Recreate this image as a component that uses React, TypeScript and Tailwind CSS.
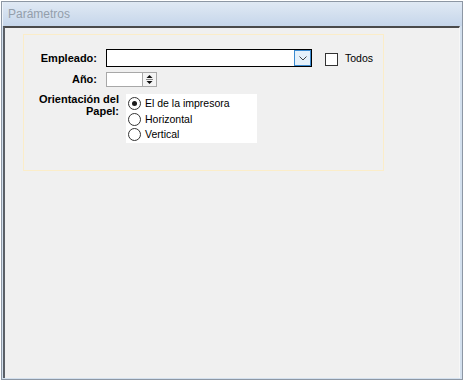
import React from "react";

const RadioOption = ({ label, checked }: { label: string; checked?: boolean }) => (
  <label className="flex items-center gap-[4px] h-[16px]">
    <span className="w-[13px] h-[13px] rounded-full border border-[#333333] bg-white flex items-center justify-center">
      {checked && <span className="w-[5px] h-[5px] rounded-full bg-[#1a1a1a]" />}
    </span>
    <span className="text-[10.5px] text-black leading-none">{label}</span>
  </label>
);

const App: React.FC = () => {
  return (
    <div className="w-[467px] h-[381px] bg-white font-['Liberation_Sans',Arial,sans-serif] overflow-hidden">
      <div className="ml-px mt-px w-[462px] h-[379px] border border-[#8d97a4] bg-[#d3e0ee] flex flex-col">
        {/* barra de título */}
        <div className="h-[24px] px-[5px] flex items-center bg-gradient-to-b from-[#e0e9f4] to-[#c6d6ea] text-[12px] text-[#939eab] border-l border-[#eef3f9]">
          Parámetros
        </div>
        <div className="flex-1 ml-px mr-[2px] mb-px border-l-2 border-t-2 border-l-[#5a5f66] border-t-[#4a4a4a] border-r border-r-[#f7f7f7] bg-[#f0f0f0] pl-[18px] pt-[6px]">
          <div className="w-[361px] h-[137px] border border-[#fbedc9] pt-[14px]">
            {/* Empleado */}
            <div className="flex items-center">
              <div className="w-[73px] text-right text-[11px] font-bold text-black">Empleado:</div>
              <div className="ml-[9px] w-[206px] h-[18px] border border-black bg-white flex justify-end">
                <div className="w-[17px] h-full border border-[#3c8bd0] bg-[#e5f1fb] flex items-center justify-center">
                  <svg width="8" height="5" viewBox="0 0 8 5">
                    <path d="M0.5 0.5 L4 4 L7.5 0.5" fill="none" stroke="#444" strokeWidth="1" />
                  </svg>
                </div>
              </div>
              <div className="ml-[13px] w-[13px] h-[13px] border border-[#333333] bg-white mt-[2px]" />
              <div className="ml-[7px] text-[10.5px] text-black mt-[2px]">Todos</div>
            </div>
            {/* Año */}
            <div className="flex items-center mt-[4px]">
              <div className="w-[73px] text-right text-[11px] font-bold text-black">Año:</div>
              <div className="ml-[9px] w-[51px] h-[15px] border border-[#a8a8a8] bg-white flex justify-end">
                <div className="w-[14px] h-full border-l border-[#a8a8a8] bg-[#f4f4f4] flex flex-col items-center justify-center">
                  <svg width="7" height="11" viewBox="0 0 7 11">
                    <path d="M3.5 1 L6.5 4 L0.5 4 Z" fill="#111" />
                    <line x1="0" y1="5.5" x2="7" y2="5.5" stroke="#888" strokeWidth="1" />
                    <path d="M0.5 7 L6.5 7 L3.5 10 Z" fill="#111" />
                  </svg>
                </div>
              </div>
            </div>
            {/* Orientación */}
            <div className="flex items-start mt-[6px]">
              <div className="w-[95px] text-right text-[11px] font-bold text-black leading-[12px] -mt-px">
                Orientación del
                <br />
                Papel:
              </div>
              <div className="ml-[7px] w-[131px] h-[49px] bg-white pl-[2px] pt-[2px] flex flex-col">
                <RadioOption label="El de la impresora" checked />
                <RadioOption label="Horizontal" />
                <RadioOption label="Vertical" />
              </div>
            </div>
          </div>
        </div>
      </div>
    </div>
  );
};

export default App;
